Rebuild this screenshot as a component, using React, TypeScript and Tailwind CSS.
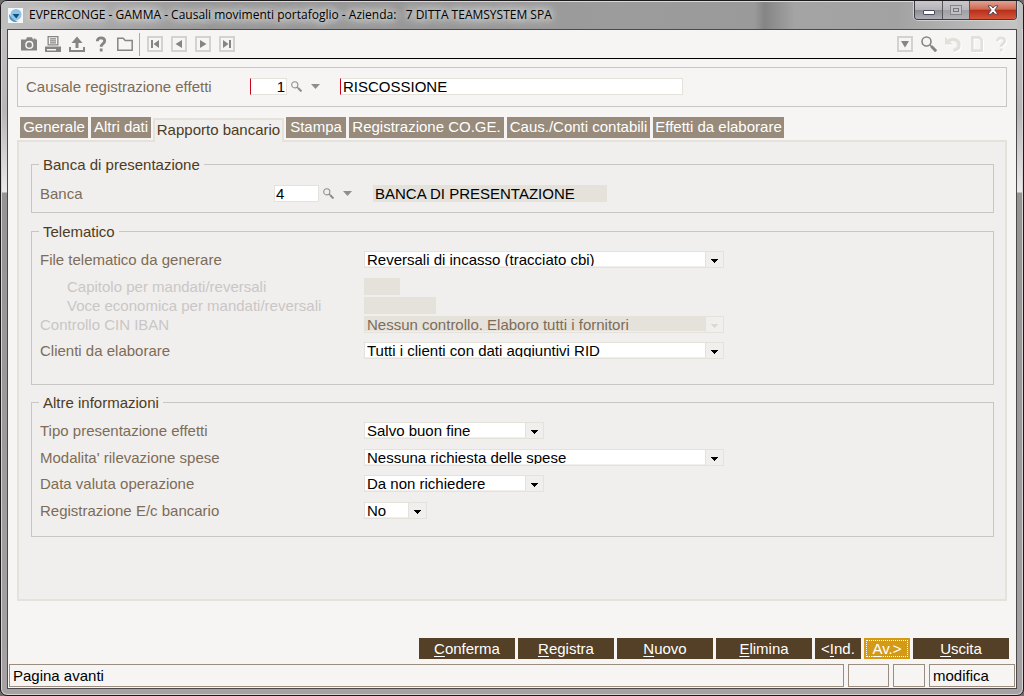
import React, { useId } from "react";

type IconProps = { className?: string };

function CameraIcon({ className }: IconProps) {
  return (
    <svg viewBox="0 0 16 16" className={className} fill="currentColor" fillRule="evenodd">
      <path d="M5 3.400 6 1.300h5l1 2.100h.6v-1h1.800v1H16V14.500H0V3.400h5Zm3.300 1.400A4.100 4.100 0 1 0 8.300 13 4.100 4.100 0 0 0 8.300 4.800Zm0 1.500a2.600 2.600 0 1 1 0 5.200 2.600 2.600 0 0 1 0-5.200Z" />
      <circle cx="8.300" cy="8.900" r="1.700" />
    </svg>
  );
}

function PrinterIcon({ className }: IconProps) {
  return (
    <svg viewBox="0 0 16 16" className={className} fill="currentColor" fillRule="evenodd">
      <path d="M2.500 0h11v9.500h-11V0Zm1.300 1.200v7.100h8.400V1.200H3.800Z" />
      <path d="M5 2.300h6v1.200H5zM5 4.300h6v1.200H5zM5 6.300h6v1.200H5z" />
      <path d="M0 10.500h16V16H0v-5.500Zm2 2.600v1.300h9v-1.300H2Z" />
    </svg>
  );
}

function UploadIcon({ className }: IconProps) {
  return (
    <svg viewBox="0 0 16 16" className={className} fill="currentColor">
      <path d="M8 .5 13.500 7H9.500v5h-3V7h-4L8 .5Z" />
      <path d="M0 11h2v3h12v-3h2v5H0z" />
    </svg>
  );
}

function HelpIcon({ className }: IconProps) {
  return (
    <svg viewBox="0 0 16 16" className={className} fill="none" stroke="currentColor" strokeWidth="2.800">
      <path d="M4.300 5.300C4.300 2.900 5.800 1.900 8 1.900s3.700 1.200 3.700 3.100c0 2.700-3.500 2.700-3.500 5.800" />
      <path d="M8.200 12.600v2.800" />
    </svg>
  );
}

function FolderIcon({ className }: IconProps) {
  return (
    <svg viewBox="0 0 16 16" className={className} fill="none" stroke="currentColor" strokeWidth="1.500">
      <path d="M.8 14.200V2.200h5.400l2 2.300h7v9.700H.8Z" />
    </svg>
  );
}

function SearchIcon({ className }: IconProps) {
  return (
    <svg viewBox="0 0 16 16" className={className} fill="none" stroke="currentColor">
      <circle cx="5.500" cy="5.500" r="4.500" strokeWidth="1.600" />
      <path d="m9 9 1.800 1.800" strokeWidth="1.600" />
      <path d="m10.300 10.300 4.900 4.900" strokeWidth="3" />
    </svg>
  );
}

function UndoIcon({ className }: IconProps) {
  return (
    <svg viewBox="0 0 16 16" className={className} fill="none" stroke="currentColor">
      <path d="M3.500 5C7.500 2 14 3.500 14 8.800c0 3.200-2 5-5.500 5.400" strokeWidth="3.400" />
      <path d="M0 .8v7.700h8L0 .8Z" fill="currentColor" stroke="none" />
    </svg>
  );
}

function PageIcon({ className }: IconProps) {
  return (
    <svg viewBox="0 0 16 16" className={className} fill="none" stroke="currentColor" strokeWidth="2.600">
      <path d="M3.300 1.400h6.800l2.600 2.600v10.600H3.300V1.400Z" />
    </svg>
  );
}

function DownTriangle({ className }: IconProps) {
  return (
    <svg viewBox="0 0 9 5" className={className} fill="currentColor">
      <path d="M0 0h9L4.500 5 0 0Z" />
    </svg>
  );
}

const navShapes: Record<string, string> = {
  first: "M2 2h2v8H2zM10 2v8L4.500 6z",
  prev: "M9 2v8L2.500 6z",
  next: "M3 2v8l6.500-4z",
  last: "M8 2h2v8H8zM2 2v8l5.500-4z",
  menu: "M2 3h8L6 9.500z",
};

function BoxButton({ shape, label }: { shape: string; label: string }) {
  return (
    <button
      type="button"
      aria-label={label}
      className="flex size-4 items-center justify-center border-2 border-[#d3d2d0] text-[#858585]"
    >
      <svg viewBox="0 0 12 12" className="size-3 shrink-0" fill="currentColor">
        <path d={navShapes[shape]} />
      </svg>
    </button>
  );
}

function ToolButton({ label, disabled, children }: { label: string; disabled?: boolean; children: React.ReactNode }) {
  return (
    <button
      type="button"
      aria-label={label}
      disabled={disabled}
      className="size-4 text-[#858585] disabled:text-[#e2e0da] disabled:drop-shadow-[1px_1px_0_#ffffff]"
    >
      {children}
    </button>
  );
}

function TitleBar() {
  return (
    <header className="flex h-7 items-start bg-[linear-gradient(90deg,#c0bfbf_0%,#a8a8a8_8%,#979797_20%,#979797_45%,#9c9c9c_60%,#9a9a9a_74%,#858585_75%,#a4a4a4_78%,#a2a2a2_88%,#c4c4c4_100%)] shadow-[inset_0_1px_0_#d8d8d8]">
      <div className="flex h-7 flex-1 items-center gap-[6px] pl-px">
        <svg viewBox="0 0 15 15" className="size-[15px]">
          <path d="M0 0h15v15H0z" fill="#f4f8fa" />
          <circle cx="8" cy="6.500" r="5.500" fill="#8fc4e2" />
          <path d="M1.500 6a6 6 0 0 0 9.500 6.500L9 13C5 12 3 9.500 1.500 6Z" fill="#4a94c4" />
          <path d="M4.500 6h7L8.300 10.500z" fill="#14507f" />
        </svg>
        <h1 className="whitespace-pre font-['Open_Sans','Noto_Sans',sans-serif] text-[12px] leading-4 text-black [text-shadow:0_0_6px_#d8d8d8,0_0_8px_#d8d8d8,0_0_10px_#d0d0d0,0_0_12px_#d0d0d0,0_0_14px_#d0d0d0]">
          EVPERCONGE - GAMMA - Causali movimenti portafoglio - Azienda:   7 DITTA TEAMSYSTEM SPA
        </h1>
      </div>
      <div className="flex h-[19px] overflow-hidden rounded-b-[4px] border border-t-0 border-[#3c3c44] shadow-[0_0_0_1px_#d0d0d0]">
        <button
          type="button"
          aria-label="Riduci a icona"
          className="flex w-7 items-end justify-center border-r border-[#55555c] bg-[linear-gradient(#c8c8cc_0%,#b4b4b8_48%,#8d8d94_52%,#aeaeb4_100%)] pb-1"
        >
          <span className="h-[5px] w-3 rounded-[1px] border border-[#4b4b5c] bg-white" />
        </button>
        <button
          type="button"
          aria-label="Ingrandisci"
          disabled
          className="flex w-[27px] items-center justify-center border-r border-[#55555c] bg-[linear-gradient(#c8c8cc_0%,#b8b8bc_48%,#a0a0a6_52%,#b2b2b6_100%)]"
        >
          <span className="flex h-[10px] w-3 items-center justify-center border border-[#85858a] bg-[#c2c2c4]">
            <span className="h-1 w-[6px] border border-[#77777c]" />
          </span>
        </button>
        <button
          type="button"
          aria-label="Chiudi"
          className="flex w-[46px] items-center justify-center bg-[linear-gradient(#e0a294_0%,#cf6a52_45%,#b8301a_52%,#d4553a_100%)]"
        >
          <svg viewBox="0 0 12 10" className="h-[10px] w-3">
            <path
              d="M1 .8h3.200L6 3 7.800.8H11L7.800 5 11 9.200H7.800L6 7 4.200 9.200H1L4.200 5 1 .8Z"
              fill="#ffffff"
              stroke="#4a3c4c"
              strokeWidth=".9"
            />
          </svg>
        </button>
      </div>
    </header>
  );
}

function Toolbar() {
  return (
    <div role="toolbar" className="flex h-[29px] items-center justify-between border-b border-black pr-[7px] pl-[13px]">
      <div className="flex items-center gap-2">
        <ToolButton label="Istantanea"><CameraIcon className="size-4" /></ToolButton>
        <ToolButton label="Stampa"><PrinterIcon className="size-4" /></ToolButton>
        <ToolButton label="Esporta"><UploadIcon className="size-4" /></ToolButton>
        <ToolButton label="Aiuto"><HelpIcon className="size-4" /></ToolButton>
        <ToolButton label="Apri"><FolderIcon className="size-4" /></ToolButton>
        <div className="-mr-px -ml-[2px] h-[23px] w-px bg-[#a9a8a6]" />
        <BoxButton shape="first" label="Primo" />
        <BoxButton shape="prev" label="Precedente" />
        <BoxButton shape="next" label="Successivo" />
        <BoxButton shape="last" label="Ultimo" />
      </div>
      <div className="flex items-center gap-2">
        <BoxButton shape="menu" label="Menu" />
        <ToolButton label="Cerca"><SearchIcon className="size-4" /></ToolButton>
        <ToolButton label="Annulla" disabled><UndoIcon className="size-4" /></ToolButton>
        <ToolButton label="Nuova pagina" disabled><PageIcon className="size-4" /></ToolButton>
        <ToolButton label="Guida" disabled><HelpIcon className="size-4" /></ToolButton>
      </div>
    </div>
  );
}

function LookupButtons() {
  return (
    <div className="flex items-center gap-[9px] pl-1 text-[#8f8e8c]">
      <button type="button" aria-label="Cerca codice" className="size-[11px]">
        <SearchIcon className="size-[11px]" />
      </button>
      <button type="button" aria-label="Apri elenco" className="flex h-[11px] w-[9px] items-center">
        <DownTriangle className="h-[5px] w-[9px]" />
      </button>
    </div>
  );
}

const tabs = [
  { label: "Generale", width: "w-[68px]" },
  { label: "Altri dati", width: "w-[60px]" },
  { label: "Rapporto bancario", width: "w-[131px]", active: true },
  { label: "Stampa", width: "w-[60px]" },
  { label: "Registrazione CO.GE.", width: "w-[155px]" },
  { label: "Caus./Conti contabili", width: "w-[143px]" },
  { label: "Effetti da elaborare", width: "w-[131px]" },
];

function TabBar() {
  return (
    <div role="tablist" className="mt-[10px] flex h-[23px] items-start gap-[3px] pl-[3px]">
      {tabs.map((tab) => (
        <button
          key={tab.label}
          type="button"
          role="tab"
          aria-selected={!!tab.active}
          className={`flex shrink-0 items-center justify-center whitespace-nowrap ${tab.width} ${
            tab.active
              ? "relative z-10 -mx-px mt-px h-6 border-2 border-b-0 border-[#e5e2dc] bg-[#f0efed] pb-1 text-[#4d3b24]"
              : "h-[21px] bg-[#988b7b] pb-[2px] text-white"
          }`}
        >
          {tab.label}
        </button>
      ))}
    </div>
  );
}

function Group({ title, className, children }: { title: string; className: string; children: React.ReactNode }) {
  return (
    <fieldset className={`border border-[#c8c6c5] px-2 ${className}`}>
      <legend className="-ml-px px-1 leading-[19px] text-[#4d3b24]">{title}</legend>
      {children}
    </fieldset>
  );
}

type RowProps = {
  label: string;
  children: (id: string) => React.ReactNode;
  disabled?: boolean;
  indent?: boolean;
  className?: string;
  columns?: string;
};

function Row({ label, children, disabled, indent, className = "", columns = "grid-cols-[324px_1fr]" }: RowProps) {
  const id = useId();
  return (
    <div className={`grid h-[17px] items-center ${columns} ${className}`}>
      <label
        htmlFor={id}
        className={`leading-[17px] ${disabled ? "text-[#cbc6c6]" : "text-[#7d6c58]"} ${indent ? "pl-[27px]" : ""}`}
      >
        {label}
      </label>
      {children(id)}
    </div>
  );
}

function Dropdown({ id, value, width, disabled }: { id: string; value: string; width: string; disabled?: boolean }) {
  return (
    <div className={`grid h-[17px] grid-cols-[1fr_18px] border border-[#e5e2dc] ${width}`}>
      <div className="col-span-2 col-start-1 row-start-1 h-[14px] overflow-hidden">
        <select
          id={id}
          defaultValue={value}
          disabled={disabled}
          className="block h-[15px] w-full appearance-none bg-white pl-[2px] leading-[15px] text-black outline-none disabled:bg-[#e5e2dc] disabled:text-[#7d6c58] disabled:opacity-100"
        >
          <option>{value}</option>
        </select>
      </div>
      <div
        className={`pointer-events-none z-10 col-start-2 row-start-1 flex h-[15px] items-center justify-center border-l border-[#e5e2dc] bg-[#f0efed] pt-[3px] ${
          disabled ? "text-[#dcd9d4]" : "text-black"
        }`}
      >
        <svg viewBox="0 0 7 4" className="h-1 w-[7px]" fill="currentColor" shapeRendering="crispEdges">
          <path d="M0 0h7v1H6v1H5v1H4v1H3V3H2V2H1V1H0z" />
        </svg>
      </div>
    </div>
  );
}

const footerButtons = [
  { before: "", key: "C", after: "onferma", width: "w-24" },
  { before: "", key: "R", after: "egistra", width: "w-24" },
  { before: "", key: "N", after: "uovo", width: "w-24" },
  { before: "", key: "E", after: "limina", width: "w-24" },
  { before: "<", key: "I", after: "nd.", width: "w-[46px]" },
  { before: "", key: "A", after: "v.>", width: "w-[46px]", focused: true },
  { before: "", key: "U", after: "scita", width: "w-24" },
];

function FooterButtons() {
  return (
    <div className="flex justify-end gap-[3px] pt-[37px] pr-[7px]">
      {footerButtons.map((b) => (
        <button
          key={b.key}
          type="button"
          className={`h-[21px] whitespace-nowrap text-center leading-[21px] text-white ${b.width} ${
            b.focused
              ? "bg-[#d39a17] outline-1 -outline-offset-3 outline-dotted outline-white"
              : "bg-[#543f27]"
          }`}
        >
          {b.before}
          <span className="underline decoration-1 underline-offset-2">{b.key}</span>
          {b.after}
        </button>
      ))}
    </div>
  );
}

function StatusBar() {
  const cell = "h-[23px] border border-[#9b8c80] pl-[3px] leading-[22px] text-black";
  return (
    <footer className="mt-[5px] flex gap-1 px-px pb-px">
      <div className={`flex-1 ${cell}`}>Pagina avanti</div>
      <div className={`w-[41px] ${cell}`} />
      <div className={`w-8 ${cell}`} />
      <div className={`w-[86px] ${cell}`}>modifica</div>
    </footer>
  );
}

export default function App() {
  return (
    <div className="bg-[#6d6d6d] font-['Liberation_Sans',Arial,sans-serif] text-[15px] leading-[17px]">
      <div className="flex min-h-screen flex-col overflow-hidden rounded-[7px] border border-[#1c1a1c] bg-[linear-gradient(180deg,#c4c3c3_0px,#b8b6b6_110px,#ebe9ea_191px,#979494_192px,#a6a2a4_100%)] px-[6px] pb-[6px] shadow-[inset_0_0_0_1px_#d6d4d5]">
        <div className="-mx-[6px] bg-[#c0bfbf] px-[6px]">
          <TitleBar />
        </div>
        <div className="flex flex-1 flex-col border border-[#4c494b] bg-[#f6f5f3]">
          <Toolbar />
          <div className="mx-[9px] mt-2 flex flex-1 flex-col">
            <div className="flex h-10 items-center border border-[#c8c6c5] pb-px pl-2">
              <label htmlFor="causale" className="w-[224px] text-[#7d6c58]">
                Causale registrazione effetti
              </label>
              <input
                id="causale"
                defaultValue="1"
                className="h-[17px] w-[37px] border border-[#e5e2dc] border-l-[#d0021b] bg-white pr-[1px] text-right text-black outline-none"
              />
              <LookupButtons />
              <input
                aria-label="Descrizione causale"
                defaultValue="RISCOSSIONE"
                className="ml-5 h-[17px] w-[343px] border border-[#e5e2dc] border-l-[#d0021b] bg-white pl-[2px] text-black outline-none"
              />
            </div>

            <TabBar />

            <main role="tabpanel" className="flex-1 border-2 border-[#e5e2dc] bg-[#f0efed] pt-[13px] pr-[11px] pb-[62px] pl-3">
              <Group title="Banca di presentazione" className="pt-[11px] pb-[10px]">
                <Row label="Banca" columns="grid-cols-[234px_1fr]">
                  {(id) => (
                    <div className="flex items-center">
                      <input
                        id={id}
                        defaultValue="4"
                        className="h-[17px] w-[45px] border border-[#e5e2dc] bg-white pl-px text-black outline-none"
                      />
                      <LookupButtons />
                      <input
                        aria-label="Descrizione banca"
                        readOnly
                        value="BANCA DI PRESENTAZIONE"
                        className="ml-[21px] h-[17px] w-[234px] bg-[#e5e2dc] pl-[2px] text-black outline-none"
                      />
                    </div>
                  )}
                </Row>
              </Group>

              <Group title="Telematico" className="mt-[9px] pt-[10px] pb-[25px]">
                <Row label="File telematico da generare">
                  {(id) => <Dropdown id={id} value="Reversali di incasso (tracciato cbi)" width="w-[360px]" />}
                </Row>
                <Row label="Capitolo per mandati/reversali" disabled indent className="mt-[10px]">
                  {(id) => <input id={id} disabled className="h-[17px] w-9 bg-[#e5e2dc]" />}
                </Row>
                <Row label="Voce economica per mandati/reversali" disabled indent className="mt-[2px]">
                  {(id) => <input id={id} disabled className="h-[17px] w-[72px] bg-[#e5e2dc]" />}
                </Row>
                <Row label="Controllo CIN IBAN" disabled className="mt-[2px]">
                  {(id) => (
                    <Dropdown id={id} value="Nessun controllo. Elaboro tutti i fornitori" width="w-[360px]" disabled />
                  )}
                </Row>
                <Row label="Clienti da elaborare" className="mt-[9px]">
                  {(id) => <Dropdown id={id} value="Tutti i clienti con dati aggiuntivi RID" width="w-[360px]" />}
                </Row>
              </Group>

              <Group title="Altre informazioni" className="mt-2 pt-[10px] pb-[17px]">
                <Row label="Tipo presentazione effetti">
                  {(id) => <Dropdown id={id} value="Salvo buon fine" width="w-[180px]" />}
                </Row>
                <Row label="Modalita' rilevazione spese" className="mt-[10px]">
                  {(id) => <Dropdown id={id} value="Nessuna richiesta delle spese" width="w-[360px]" />}
                </Row>
                <Row label="Data valuta operazione" className="mt-[9px]">
                  {(id) => <Dropdown id={id} value="Da non richiedere" width="w-[180px]" />}
                </Row>
                <Row label="Registrazione E/c bancario" className="mt-[10px]">
                  {(id) => <Dropdown id={id} value="No" width="w-[63px]" />}
                </Row>
              </Group>
            </main>
          </div>
          <FooterButtons />
          <StatusBar />
        </div>
      </div>
    </div>
  );
}
